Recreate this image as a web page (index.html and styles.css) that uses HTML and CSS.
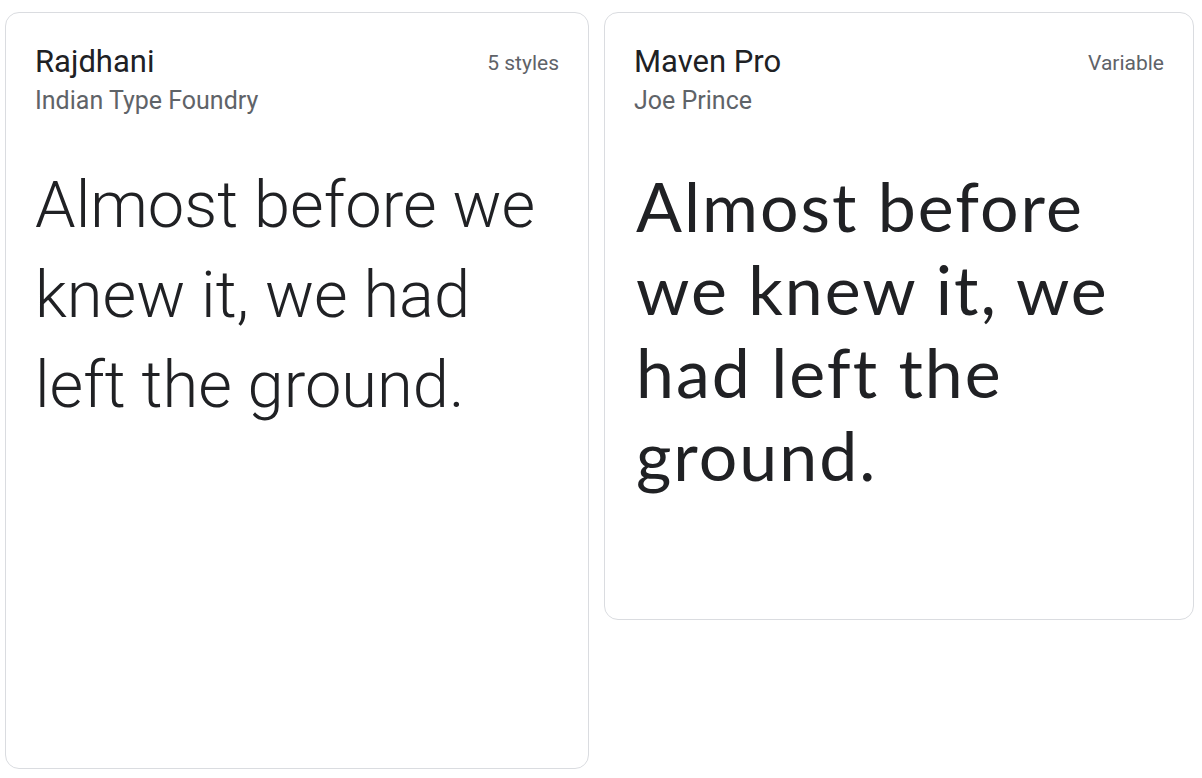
FILE: index.html
```html
<!DOCTYPE html>
<html lang="en">
<head>
<meta charset="utf-8">
<title>Font cards</title>
<link rel="stylesheet" href="styles.css">
</head>
<body>
<div class="grid">
  <article class="card card--tall">
    <div class="card-head">
      <div class="names">
        <div class="family">Rajdhani</div>
        <div class="designer">Indian Type Foundry</div>
      </div>
      <div class="meta">5 styles</div>
    </div>
    <p class="sample sample--rajdhani">Almost before we<br>knew it, we had<br>left the ground.</p>
  </article>
  <article class="card card--short">
    <div class="card-head">
      <div class="names">
        <div class="family">Maven Pro</div>
        <div class="designer">Joe Prince</div>
      </div>
      <div class="meta">Variable</div>
    </div>
    <p class="sample sample--maven">Almost before<br>we knew it, we<br>had left the<br>ground.</p>
  </article>
</div>
</body>
</html>
```

FILE: styles.css
```css
body {
  margin: 0;
  background: #ffffff;
  font-family: Roboto, "Liberation Sans", Arial, sans-serif;
}

.grid {
  display: grid;
  grid-template-columns: 584px 590px;
  column-gap: 15px;
  align-items: start;
  padding: 12px 0 0 5px;
}

.card {
  box-sizing: border-box;
  border: 1px solid #dadce0;
  border-radius: 14px;
  padding: 29px 29px 0 29px;
  background: #ffffff;
  overflow: hidden;
}

.card--tall {
  height: 757px;
}

.card--short {
  height: 608px;
}

.card-head {
  display: flex;
  justify-content: space-between;
  align-items: flex-start;
}

.family {
  font-size: 31px;
  line-height: 40px;
  color: #202124;
}

.designer {
  font-size: 25px;
  line-height: 34px;
  margin-top: 2px;
  color: #5f6368;
}

.meta {
  font-size: 21px;
  line-height: 28px;
  margin-top: 7px;
  color: #5f6368;
}

.sample {
  margin: 0;
  color: #202124;
}

.sample--rajdhani {
  margin-top: 42px;
  font-family: Roboto, "Liberation Sans", sans-serif;
  font-weight: 300;
  font-size: 65px;
  line-height: 90px;
}

.sample--maven {
  margin-top: 46px;
  padding-left: 2px;
  font-family: Lato, "Open Sans", sans-serif;
  font-weight: 400;
  font-size: 68px;
  line-height: 83px;
  letter-spacing: 2px;
}
```
